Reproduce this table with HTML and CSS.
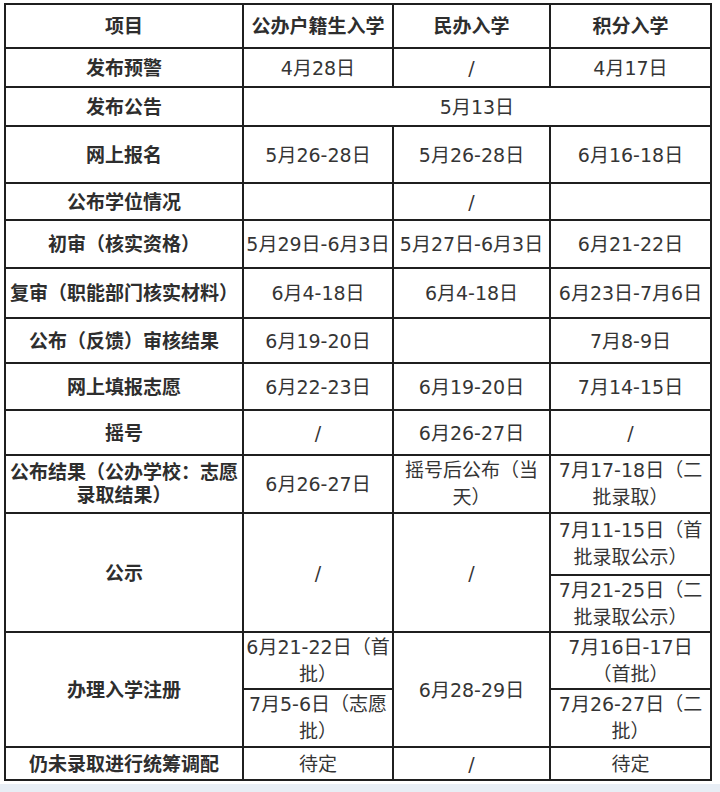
FILE: index.html
```html
<!DOCTYPE html>
<html lang="zh-CN">
<head>
<meta charset="utf-8">
<title>招生时间表</title>
<link rel="stylesheet" href="styles.css">
</head>
<body>
<div class="page">
<table class="sched">
  <colgroup>
    <col class="c1"><col class="c2"><col class="c3"><col class="c4">
  </colgroup>
  <tr class="h44"><th>项目</th><th>公办户籍生入学</th><th>民办入学</th><th>积分入学</th></tr>
  <tr class="h39"><th>发布预警</th><td>4月28日</td><td>/</td><td>4月17日</td></tr>
  <tr class="h39"><th>发布公告</th><td colspan="3">5月13日</td></tr>
  <tr class="h57"><th>网上报名</th><td>5月26-28日</td><td>5月26-28日</td><td>6月16-18日</td></tr>
  <tr class="h37"><th>公布学位情况</th><td></td><td>/</td><td></td></tr>
  <tr class="h48"><th>初审（核实资格）</th><td>5月29日-6月3日</td><td>5月27日-6月3日</td><td>6月21-22日</td></tr>
  <tr class="h50"><th>复审（职能部门核实材料）</th><td>6月4-18日</td><td>6月4-18日</td><td>6月23日-7月6日</td></tr>
  <tr class="h45"><th>公布（反馈）审核结果</th><td>6月19-20日</td><td></td><td>7月8-9日</td></tr>
  <tr class="h47"><th>网上填报志愿</th><td>6月22-23日</td><td>6月19-20日</td><td>7月14-15日</td></tr>
  <tr class="h45"><th>摇号</th><td>/</td><td>6月26-27日</td><td>/</td></tr>
  <tr class="h58"><th class="wrap">公布结果（公办学校：志愿<br>录取结果）</th><td>6月26-27日</td><td class="wrap">摇号后公布（当<br>天）</td><td class="wrap">7月17-18日（二<br>批录取）</td></tr>
  <tr class="h62"><th rowspan="2">公示</th><td rowspan="2">/</td><td rowspan="2">/</td><td class="wrap">7月11-15日（首<br>批录取公示）</td></tr>
  <tr class="h57"><td class="wrap">7月21-25日（二<br>批录取公示）</td></tr>
  <tr class="h57"><th rowspan="2">办理入学注册</th><td class="wrap">6月21-22日（首<br>批）</td><td rowspan="2">6月28-29日</td><td class="wrap">7月16日-17日<br>（首批）</td></tr>
  <tr class="h58"><td class="wrap">7月5-6日（志愿<br>批）</td><td class="wrap">7月26-27日（二<br>批）</td></tr>
  <tr class="h33"><th>仍未录取进行统筹调配</th><td>待定</td><td>/</td><td>待定</td></tr>
</table>
</div>
</body>
</html>
```

FILE: styles.css
```css
html {
  background: #e8eef5;
}
body {
  margin: 0;
}
.page {
  background: #ffffff;
  height: 784px;
  box-sizing: border-box;
  padding: 3px 0 0 4px;
}
.sched {
  border-collapse: collapse;
  table-layout: fixed;
  width: 706px;
  font-family: "DejaVu Sans", "Noto Sans CJK SC", sans-serif;
  font-size: 19px;
  color: #353535;
}
.c1 { width: 238px; }
.c2 { width: 150px; }
.c3 { width: 157px; }
.c4 { width: 161px; }
.sched th,
.sched td {
  border: 2px solid #1f1f1f;
  text-align: center;
  vertical-align: middle;
  padding: 0 2px;
  white-space: nowrap;
  line-height: 24px;
}
.sched th {
  font-weight: bold;
  color: #2e2e2e;
}
.sched th.wrap { line-height: 23px; }
.sched td.wrap { line-height: 27px; }
.h33 { height: 33px; }
.h37 { height: 37px; }
.h39 { height: 39px; }
.h44 { height: 44px; }
.h45 { height: 45px; }
.h47 { height: 47px; }
.h48 { height: 48px; }
.h50 { height: 50px; }
.h57 { height: 57px; }
.h58 { height: 58px; }
.h62 { height: 62px; }
```
